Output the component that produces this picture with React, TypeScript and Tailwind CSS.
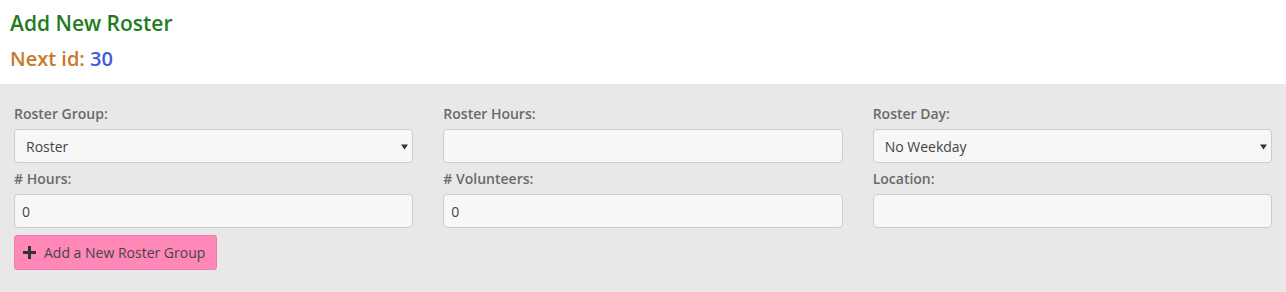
import React from "react";

const font = { fontFamily: '"Open Sans", "Liberation Sans", sans-serif' };

const Label = ({ children }: { children: React.ReactNode }) => (
    <label className="block h-[19px] mb-[5px] text-[14px] leading-[18px] font-semibold text-[#6a6a6a]">
        {children}
    </label>
);

const TextBox = ({ value = "" }: { value?: string }) => (
    <div className="h-[34px] rounded-[4px] border border-[#cccccc] bg-[#f7f7f7] px-[7px] flex items-center text-[14px] text-[#444]">
        {value}
    </div>
);

const Select = ({ value }: { value: string }) => (
    <div className="h-[34px] rounded-[4px] border border-[#cccccc] bg-[#f7f7f7] pl-[11px] pr-[4px] flex items-center justify-between text-[14px] text-[#444]">
        <span>{value}</span>
        <svg width="7" height="7" viewBox="0 0 7 7" className="mt-[1px]">
            <path d="M0 1.5 H7 L3.5 6.5 Z" fill="#333" />
        </svg>
    </div>
);

export default function App() {
    return (
        <div style={font} className="w-[1286px] h-[292px] bg-white overflow-hidden">
            <div className="px-[10px] pt-[10px] h-[84px]">
                <h2 className="text-[21px] leading-[27px] font-semibold text-[#1e7b1e]">Add New Roster</h2>
                <h3 className="mt-[9px] text-[20px] leading-[26px] font-semibold text-[#c87a2a]">
                    Next id: <span className="text-[#3f5ad8]">30</span>
                </h3>
            </div>

            <div className="bg-[#e8e8e8] px-[14px] pt-[21px] h-[208px]">
                <div className="grid grid-cols-3 gap-x-[30px] gap-y-[7px]">
                    <div>
                        <Label>Roster Group:</Label>
                        <Select value="Roster" />
                    </div>
                    <div>
                        <Label>Roster Hours:</Label>
                        <TextBox />
                    </div>
                    <div>
                        <Label>Roster Day:</Label>
                        <Select value="No Weekday" />
                    </div>
                    <div>
                        <Label># Hours:</Label>
                        <TextBox value="0" />
                    </div>
                    <div>
                        <Label># Volunteers:</Label>
                        <TextBox value="0" />
                    </div>
                    <div>
                        <Label>Location:</Label>
                        <TextBox />
                    </div>
                </div>

                <button className="mt-[7px] h-[35px] w-[203px] rounded-[3px] border border-[#f07aa8] bg-[#ff88b8] flex items-center pl-[8px] text-[14px] text-[#444]">
                    <svg width="13" height="13" viewBox="0 0 13 13" className="mr-[8px]">
                        <path d="M5 0 H8 V5 H13 V8 H8 V13 H5 V8 H0 V5 H5 Z" fill="#333" />
                    </svg>
                    Add a New Roster Group
                </button>
            </div>
        </div>
    );
}
